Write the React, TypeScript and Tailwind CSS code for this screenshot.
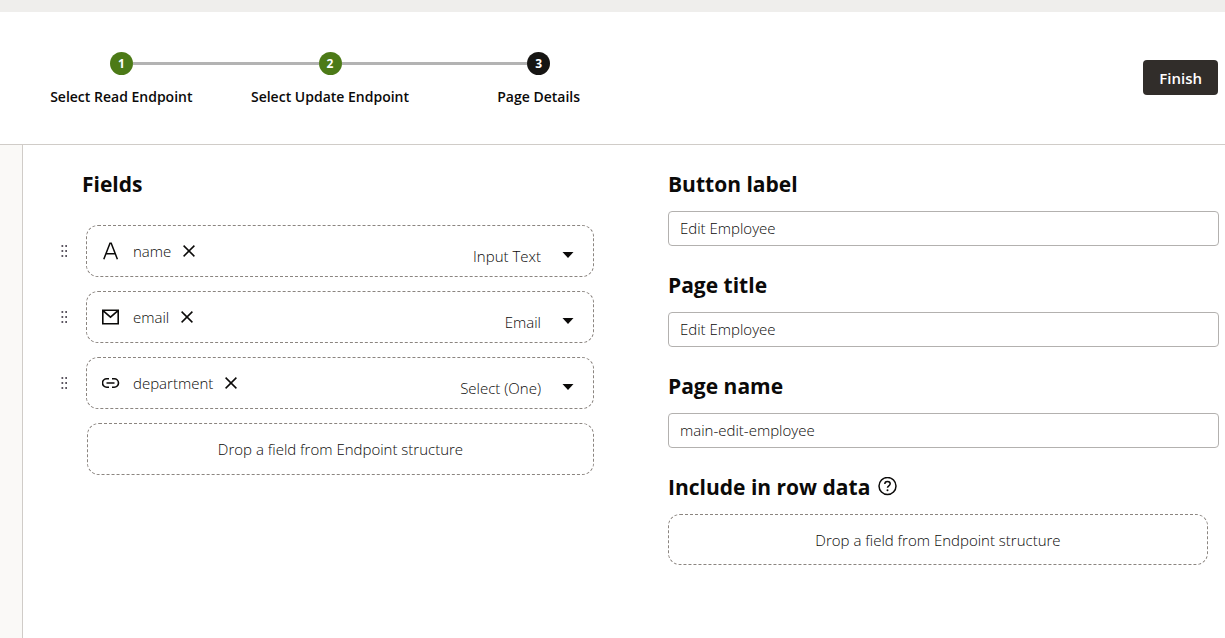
import { useState } from "react";
import type { ReactNode } from "react";

const steps = [
  { label: "Select Read Endpoint", done: true },
  { label: "Select Update Endpoint", done: true },
  { label: "Page Details", done: false },
];

const controls = ["Input Text", "Email", "Select (One)"];

function TextIcon() {
  return (
    <svg viewBox="0 0 18 18" className="size-[18px]" fill="none" stroke="currentColor" strokeWidth="1.5" aria-hidden="true">
      <path d="M1.800 17.2 8 1.200h1.200l6.200 16M4.200 11.7h8.800" />
    </svg>
  );
}

function MailIcon() {
  return (
    <svg viewBox="0 0 18 18" className="size-[18px]" fill="none" stroke="currentColor" strokeWidth="1.6" aria-hidden="true">
      <path d="M.8 2.200h15.400v13.600H.8zM1.300 2.800 8.500 9.200l7.200-6.400" />
    </svg>
  );
}

function LinkIcon() {
  return (
    <svg viewBox="0 0 18 18" className="size-[18px]" fill="none" stroke="currentColor" strokeWidth="1.6" aria-hidden="true">
      <path d="M7 4.700H4.800a4.300 4.300 0 0 0 0 8.600H7M10 4.700h2.200a4.300 4.300 0 0 1 0 8.600H10M4.500 9h8" />
    </svg>
  );
}

function CloseIcon() {
  return (
    <svg viewBox="0 0 12 12" className="size-3" fill="none" stroke="currentColor" strokeWidth="1.5" aria-hidden="true">
      <path d="m.6.6 10.8 10.8M11.4.6.6 11.4" />
    </svg>
  );
}

function DragHandle() {
  return (
    <svg viewBox="0 0 6 12" className="h-3 w-[6px]" fill="#5b5560" aria-hidden="true">
      {[0, 5, 10].map((y) => (
        <path key={y} d={`M.500 ${y}h1.700v2H.500zM4.300 ${y}h1.700v2H4.300z`} />
      ))}
    </svg>
  );
}

function HelpIcon() {
  return (
    <svg viewBox="0 0 20 20" className="size-5" fill="none" stroke="currentColor" strokeWidth="1.5" aria-hidden="true">
      <circle cx="9.500" cy="9" r="8.500" />
      <path d="M6.800 7.100c0-1.600 1.100-2.600 2.700-2.600s2.700 1 2.700 2.300c0 1.900-2.700 2.100-2.700 4" />
      <circle cx="9.500" cy="13.200" r="1" fill="currentColor" stroke="none" />
    </svg>
  );
}

function FieldRow({ name, icon, control, onRemove }: { name: string; icon: ReactNode; control: string; onRemove: () => void }) {
  return (
    <li className="flex items-center gap-[19px]">
      <DragHandle />
      <div className="flex h-[52px] flex-1 items-center justify-between rounded-xl border border-dashed border-[#8b8580] px-[15px]">
        <div className="flex items-center">
          {icon}
          <span className="ml-[13px]">{name}</span>
          <button type="button" aria-label={`Remove ${name}`} onClick={onRemove} className="ml-3 cursor-pointer">
            <CloseIcon />
          </button>
        </div>
        <div className="grid items-center pt-2">
          <select
            aria-label={`Control for ${name}`}
            defaultValue={control}
            className="col-start-1 row-start-1 w-40 appearance-none bg-transparent pt-[2px] pr-[37px] text-right [text-align-last:right]"
          >
            {controls.map((c) => (
              <option key={c}>{c}</option>
            ))}
          </select>
          <svg viewBox="0 0 12 6" className="pointer-events-none col-start-1 row-start-1 mr-1 h-[6px] w-3 justify-self-end" fill="currentColor" aria-hidden="true">
            <path d="M.5 0h11L6 6z" />
          </svg>
        </div>
      </div>
    </li>
  );
}

function TextField({ id, label, value }: { id: string; label: string; value: string }) {
  return (
    <div className="mb-[23px]">
      <label htmlFor={id} className="block text-[21px] leading-8 font-bold">
        {label}
      </label>
      <input
        id={id}
        type="text"
        defaultValue={value}
        className="mt-[11px] block h-[35px] w-full rounded-[4px] border border-[#b3b1af] bg-white px-[11px] pb-[2px]"
      />
    </div>
  );
}

export default function App() {
  const [fields, setFields] = useState([
    { name: "name", icon: <TextIcon />, control: "Input Text" },
    { name: "email", icon: <MailIcon />, control: "Email" },
    { name: "department", icon: <LinkIcon />, control: "Select (One)" },
  ]);

  return (
    <div className="flex min-h-screen flex-col bg-white font-['Open_Sans','Noto_Sans',sans-serif] text-[15px] leading-5 font-light text-[#0b0a09]">
      <div className="h-3 bg-[#efeeec]" />
      <header className="flex items-start justify-between border-b border-[#d0ccc8] pr-[7px] pb-[37px] pl-[17px]">
        <ol className="mt-10 grid w-full max-w-[626px] grid-cols-3">
          {steps.map((step, i) => (
            <li key={step.label} className="flex flex-col items-center gap-3">
              <div className="flex w-full items-center">
                <span className={i === 0 ? "flex-1" : "h-[3px] flex-1 bg-[#b3b3b3]"} />
                <span
                  className={`flex size-[23px] items-center justify-center rounded-full text-[12px] font-bold text-white ${
                    step.done ? "bg-[#4c7a17]" : "bg-[#161513]"
                  }`}
                >
                  {i + 1}
                </span>
                <span className={i === steps.length - 1 ? "flex-1" : "h-[3px] flex-1 bg-[#b3b3b3]"} />
              </div>
              <span className="text-[14px] leading-5 font-semibold">{step.label}</span>
            </li>
          ))}
        </ol>
        <button type="button" className="mt-12 h-[35px] cursor-pointer rounded-[4px] bg-[#312d2a] px-4 text-[15px] font-semibold text-white">
          Finish
        </button>
      </header>
      <div className="flex flex-1">
        <aside className="w-[23px] border-r border-[#d0ccc8] bg-[#faf9f7]" />
        <main className="grid flex-1 grid-cols-[533fr_551fr] gap-[74px] pt-[23px] pr-[6px] pl-[38px]">
          <section>
            <h2 className="ml-[21px] text-[21px] leading-8 font-bold">Fields</h2>
            <ul className="mt-[25px] flex flex-col gap-[14px]">
              {fields.map((f) => (
                <FieldRow key={f.name} {...f} onRemove={() => setFields(fields.filter((x) => x !== f))} />
              ))}
            </ul>
            <div className="mt-[14px] ml-[26px] flex h-[52px] items-center justify-center rounded-xl border border-dashed border-[#8b8580]">
              Drop a field from Endpoint structure
            </div>
          </section>
          <section>
            <TextField id="button-label" label="Button label" value="Edit Employee" />
            <TextField id="page-title" label="Page title" value="Edit Employee" />
            <TextField id="page-name" label="Page name" value="main-edit-employee" />
            <h2 className="flex items-center gap-2 text-[21px] leading-8 font-bold">
              Include in row data
              <button type="button" aria-label="Help" className="cursor-pointer">
                <HelpIcon />
              </button>
            </h2>
            <div className="mt-[11px] mr-[11px] flex h-[51px] items-center justify-center rounded-xl border border-dashed border-[#8b8580]">
              Drop a field from Endpoint structure
            </div>
          </section>
        </main>
      </div>
    </div>
  );
}
